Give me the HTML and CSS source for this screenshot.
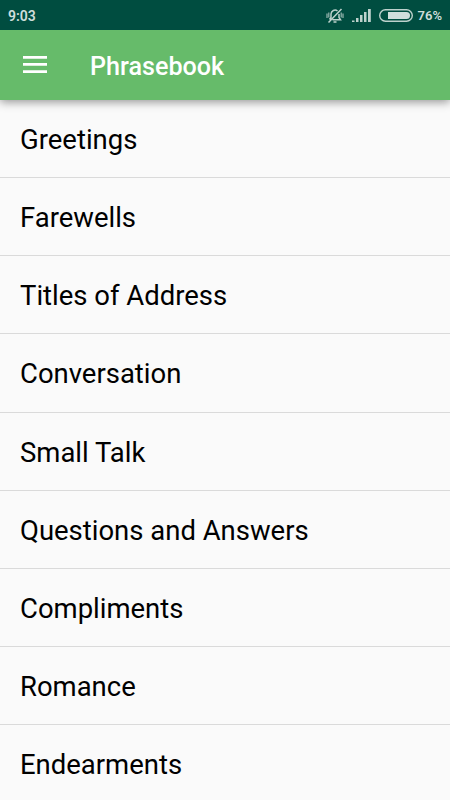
FILE: index.html
```html
<!DOCTYPE html>
<html lang="en">
<head>
<meta charset="utf-8">
<title>Phrasebook</title>
<link rel="stylesheet" href="styles.css">
</head>
<body>
<div class="status">
  <span class="clock">9:03</span>
  <svg class="mute" width="18" height="16" viewBox="0 0 18 16" fill="none" stroke="#bdd1cc" stroke-width="1.500"><path d="M3.500 11.500 5 9.500V6a4 4 0 0 1 6.500-3M13 6v3.500l1.500 2.300H6.500M7.500 14h3M2.500 14.500 15.500 1"/><path d="M1 5.500v4.500M2.800 4.500v5M15.200 4.500v5M17 5.500v4.500" stroke-width="1.200" stroke-opacity=".8"/></svg>
  <svg class="signal" width="19" height="13" viewBox="0 0 19 13" fill="#bdd1cc"><path d="M0 11.500h2.500V13H0zM4 9h2.500v4H4zM8 6h2.500v7H8zM12 3h2.500v10H12zM16 0h2.800v13H16z"/></svg>
  <svg class="battery" width="34" height="13" viewBox="0 0 34 13"><rect x=".7" y=".7" width="32.600" height="11.600" rx="5.800" fill="none" stroke="#bdd1cc" stroke-width="1.400"/><path d="M9 3h18.500a3.500 3.500 0 0 1 0 7H9z" fill="#cfdedb"/></svg>
  <span class="percent">76%</span>
</div>
<header class="bar">
  <svg class="menu" width="24" height="17" viewBox="0 0 24 17" fill="#fff"><path d="M0 0h24v2.700H0zM0 7.100h24v2.700H0zM0 14.200h24v2.700H0z"/></svg>
  <h1>Phrasebook</h1>
</header>
<ul class="list">
  <li>Greetings</li>
  <li>Farewells</li>
  <li>Titles of Address</li>
  <li>Conversation</li>
  <li>Small Talk</li>
  <li>Questions and Answers</li>
  <li>Compliments</li>
  <li>Romance</li>
  <li>Endearments</li>
</ul>
</body>
</html>
```
FILE: styles.css
```css
* { box-sizing: border-box; }
body { margin: 0; height: 800px; overflow: hidden; background: #fafafa; font-family: Roboto, sans-serif; color: #000; }
.status { height: 30px; display: flex; align-items: center; padding: 1px 8px 0; background: #004d40; color: #cfdedb; font-size: 14px; font-weight: 500; }
.clock { margin-right: auto; font-weight: 600; }
.mute { margin-right: 8px; }
.signal { margin-right: 8px; }
.battery { margin-right: 5px; }
.percent { font-size: 13px; font-weight: 600; }
.bar { position: relative; height: 70px; display: flex; align-items: center; padding-left: 23px; background: #66bb6a; box-shadow: 0 2px 9px rgba(0,0,0,.42); clip-path: inset(0 0 -20px 0); color: #fff; }
.menu { margin: -2px 43px 0 0; }
h1 { margin: 2px 0 0; font-size: 25.150px; font-weight: 500; }
.list { margin: 0; padding: 0; list-style: none; }
li { height: 78.150px; padding: 3px 20px 0; display: flex; align-items: center; border-bottom: 1px solid #dadada; font-size: 27.470px; }
```
